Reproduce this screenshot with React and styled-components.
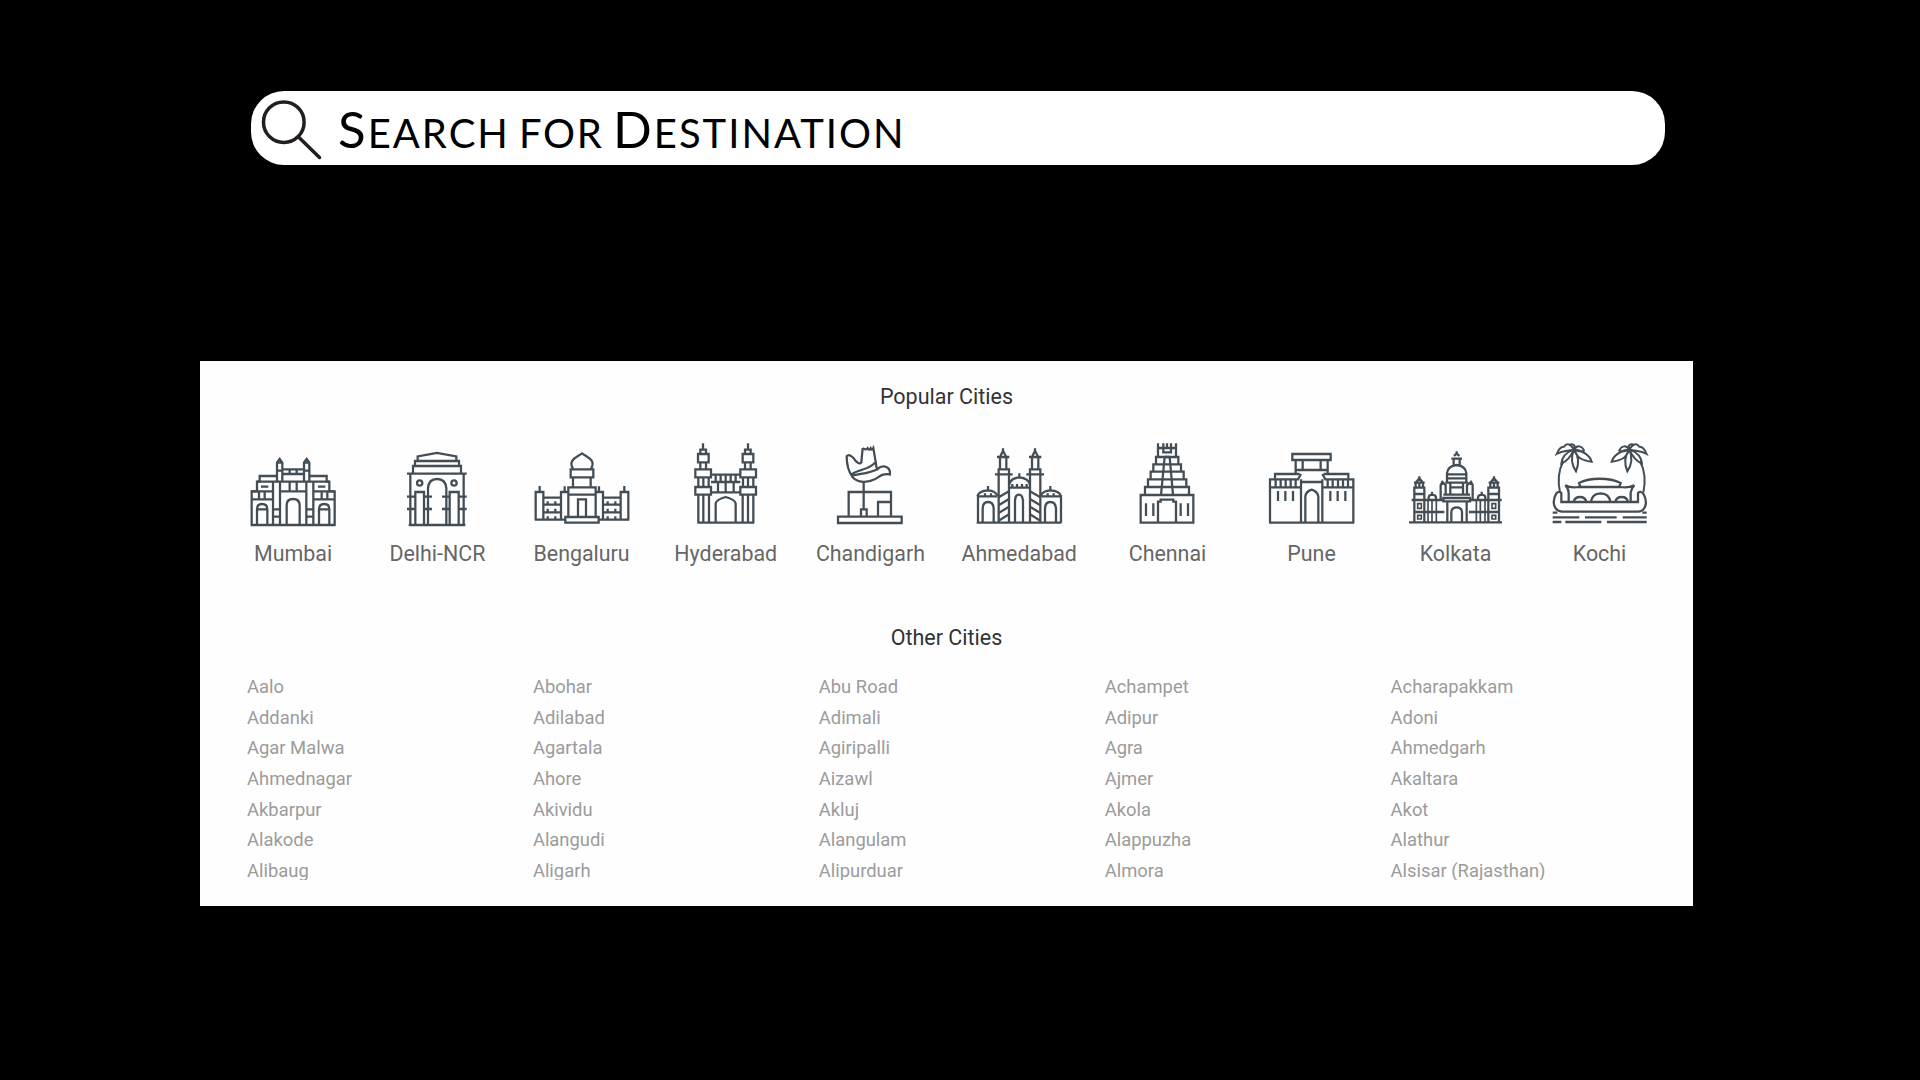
import React from 'react';
import styled, { createGlobalStyle } from 'styled-components';

const GlobalStyle = createGlobalStyle`
  *, *::before, *::after { box-sizing: border-box; }
  body { margin: 0; background: #000; overflow: hidden; }
`;

const Page = styled.div`
  width: 1920px;
  height: 1080px;
  padding: 91px 226px 0 200px;
  background: #000;
  font-family: Roboto, 'Liberation Sans', sans-serif;
`;

const SearchBar = styled.div`
  display: flex;
  align-items: flex-start;
  width: 1414px;
  height: 74px;
  margin-left: 51px;
  padding-left: 9px;
  border-radius: 33px;
  background: #fff;
`;

const SearchIcon = styled.svg`
  flex: none;
  width: 64px;
  height: 64px;
  margin-top: 7px;
  fill: none;
  stroke: #231f20;
  stroke-width: 3.5;
`;

const Placeholder = styled.div`
  display: flex;
  margin-left: 14px;
  font-family: Lato, 'Open Sans', sans-serif;
  font-size: 57px;
  line-height: 71px;
  color: #000;
  white-space: pre;
`;

const Word = styled.span`
  display: block;
  flex: none;
  width: ${(p) => p.$width}px;
  font-variant: small-caps;
  letter-spacing: ${(p) => p.$spacing}px;
  &::first-letter { font-size: ${(p) => (p.$capital ? '51px' : '57px')}; }
`;

const Panel = styled.main`
  width: 1493px;
  height: 545px;
  margin-top: 196px;
  padding-top: 20px;
  background: #fefefe;
`;

const Heading = styled.h2`
  margin: 0;
  font-size: 21.5px;
  font-weight: 400;
  line-height: 32px;
  text-align: center;
  color: #333;
`;

const PopularList = styled.div`
  display: flex;
  margin: 27px 0 55px 21px;
`;

const City = styled.div`
  display: flex;
  flex: none;
  flex-direction: column;
  align-items: center;
  width: ${(p) => p.$width}px;
  font-size: 21.4px;
  line-height: 26px;
  color: #666;
  white-space: nowrap;
`;

const CityIcon = styled.svg`
  width: 100px;
  height: 90px;
  margin-bottom: 11px;
  fill: none;
  stroke: #434d55;
  stroke-width: 6.8;
`;

const OtherList = styled.div`
  display: grid;
  grid-template-columns: repeat(5, 285.9px);
  grid-auto-rows: 30.65px;
  height: 207.5px;
  margin: 18px 0 0 47px;
  overflow: hidden;
`;

const OtherCity = styled.div`
  font-size: 18.4px;
  line-height: 30px;
  color: #9b9b9b;
  white-space: nowrap;
`;

const Mumbai = () => (
  <>
    <path d="M66 285V184H82V155H90V138H142M315 285V184H299V155H291V138H239M63 285H318" />
    <path d="M82 155H299M66 184H130M251 184H315M66 208H130M251 208H315M88 184V208M105 184V208M276 184V208M293 184V208" />
    <path d="M130 155V285M151 155V285M230 155V285M251 155V285M130 238H151M130 260H151M230 238H251M230 260H251M151 184H230M180 155V184M201 155V184" />
    <path d="M142 155V98L150 87L158 98V155M223 155V98L231 87L239 98V155M142 98H158M223 98H239M158 118H223M158 132H223M180 118V132M201 118V132M142 122H158M223 122H239" />
    <path d="M171 285V226Q171 207 190 207Q210 207 210 226V285M82 285V238Q82 222 97 222Q113 222 113 238V285M268 285V238Q268 222 284 222Q299 222 299 238V285M82 238H113M268 238H299M94 170H116M265 170H287" />
  </>
);

const Delhi = () => (
  <>
    <path d="M565 93V79L623 69L681 79V93M557 108V93H689V108M551 130V108H695V130M533 131H712M543 131V285M703 131V285M538 285H708" />
    <path d="M596 285V175Q598 147 623 147Q649 147 651 175V285M558 285V186H584V285M661 285V186H688V285" />
    <circle cx="571" cy="159" r="8" />
    <circle cx="674" cy="159" r="8" />
    <path d="M533 200H558M584 200H608M533 237H558M584 237H608M638 200H661M688 200H712M638 237H661M688 237H712" />
  </>
);

const Bengaluru = () => (
  <>
    <path d="M76 269V186H99V269M331 269V186H354V269M88 186V168M342 186V168M73 269H165M265 269H357M99 203H152M278 203H331M99 224H152M278 224H331M99 247H152M278 247H331" />
    <path d="M112 214V224M135 214V224M112 236V247M135 236V247M112 259V269M135 259V269M292 214V224M315 214V224M292 236V247M315 236V247M292 259V269M315 259V269" />
    <path d="M152 269V186H174M278 269V186H256M163 186V169M266 186V169M174 260V172H256V260M174 194H256M165 261H265V278H165ZM203 260V208H227V260" />
    <path d="M188 172V142M241 172V142M181 118H249V142H181ZM188 116C173 91 195 84 215 70C235 84 257 91 242 116" />
  </>
);

const Hyderabad = () => (
  <>
    <path d="M556 118H603V142H556ZM691 118H738V142H691ZM556 171H603V194H556ZM691 171H738V194H691ZM564 72H596V97H564ZM698 72H730V97H698Z" />
    <path d="M571 72V59H588V72M579 59V40M705 72V59H722V72M714 59V40M571 97V118M588 97V118M705 97V118M722 97V118" />
    <path d="M565 142V171M580 142V171M596 142V171M699 142V171M714 142V171M730 142V171M565 194V278M580 194V278M597 194V278M698 194V278M714 194V278M730 194V278M562 278H733" />
    <path d="M603 134H691M603 156H691M603 187H691M617 134V156M632 134V156M647 134V156M662 134V156M677 134V156M624 156V187M647 156V187M671 156V187M617 278V220Q619 209 647 201Q675 209 677 220V278" />
  </>
);

const Chandigarh = () => (
  <>
    <path d="M116 260H307V279H116ZM148 260V186H275V260M236 260V216H275M185 260V238H202V260M193 238V157" />
    <path d="M190 54L186 97C181 105 171 97 163 85Q150 70 142 79C142 105 148 126 160 142C176 159 205 159 226 148C242 139 249 129 272 133Q274 113 255 109Q243 108 235 117Q229 111 230 101L222 54Q217 63 214 55Q209 63 205 55Q199 62 190 54M156 134C175 117 211 120 227 98M158 137C184 130 215 131 236 116" />
  </>
);

const Ahmedabad = () => (
  <>
    <path d="M531 278H785M535 278V199H593M533 199Q537 182 566 181Q586 182 594 197M565 182V168M784 278V199H725M723 197Q730 182 752 181Q780 182 784 199M752 182V168" />
    <path d="M597 278V118H628V278M691 278V118H722V278M586 133H639M680 133H733M592 81H629M688 81H725M601 118V81L610 62L620 81V118M697 118V81L706 62L716 81V118M610 62V55M706 62V55" />
    <path d="M628 173H691M628 164Q634 144 659 142Q686 144 691 164M659 142V130M638 173V162M652 173V162M667 173V162M681 173V162M549 278V235Q550 216 565 216Q581 216 582 235V278M736 278V235Q737 216 752 216Q767 216 769 235V278" />
    <path d="M646 278V211Q647 194 658 194Q668 194 670 211V278M597 202L628 184M597 226L628 207M597 249L628 230M597 272L628 253M722 202L691 184M722 226L691 207M722 249L691 230M722 272L691 253M556 199V190M574 199V190M744 199V190M762 199V190" />
  </>
);

const Chennai = () => (
  <>
    <path d="M94 278V195H252V278ZM146 278V215H154V209H192V215H200V278M110 220V258M132 220V258M214 220V258M236 220V258" />
    <path d="M107 195V171H239V195M116 171V148H231V171M124 148V125H223V148M132 125V103H215V125M140 103V81H207V103M146 81V40M200 81V40M146 54H200M162 40V67H185V40M173 40V54" />
    <path d="M166 81L155 195M181 81L191 195M166 81H181" />
  </>
);

const Pune = () => (
  <>
    <path d="M547 72H662V90H547ZM557 90V132M653 90V132M557 120H653M578 90V120M632 90V120M495 146V132H569M641 132H715V146" />
    <path d="M480 278V148H564L573 132M730 278V148H646L637 132M477 278H733M480 172H573M637 172H730M573 148V278M637 148V278M573 156H637" />
    <path d="M497 148V172M512 148V172M527 148V172M542 148V172M557 148V172M653 148V172M668 148V172M684 148V172M699 148V172M714 148V172M504 183V213M526 183V213M549 183V213M661 183V213M683 183V213M706 183V213" />
    <path d="M586 278V200Q587 185 605 179Q623 185 625 200V278" />
  </>
);

const Kolkata = () => (
  <>
    <path d="M57 277H336M73 277V173H103V277M295 277V173H327V277M65 210H163M237 210H335M73 192H103M295 192H327M73 246H163M237 246H327" />
    <path d="M77 173V158L88 145L99 158V173M88 145V139M72 158H104M301 173V158L312 145L323 158V173M312 145V139M296 158H328M88 158V173M312 158V173" />
    <path d="M83 221H94V235H83ZM83 256H94V267H83ZM306 221H317V235H306ZM306 256H317V267H306ZM114 210V277M126 210V277M139 210V277M259 210V277M271 210V277M285 210V277" strokeWidth="5" />
    <path d="M116 210V202Q117 195 126 194Q137 195 138 202V210M126 194V185M264 210V202Q265 195 275 194Q286 195 286 202V210M275 194V185" />
    <path d="M152 210V165L157 156L167 165V194M248 210V165L243 156L231 165V194M157 165V152M243 165V152M160 194H240M160 204H240V214H160ZM172 214V277M230 214V277M184 277V246Q185 232 200 232Q215 232 216 246V277" />
    <path d="M171 158V130Q173 108 200 105Q227 108 229 130V158M171 133H229M171 145H229M166 158H234M181 158V194M219 158V194M181 172H219M191 104V86H209V104M184 86H216M192 78L200 70L208 78M200 76V64" />
  </>
);

const Palm = ({ transform }) => (
  <g transform={transform} strokeWidth="6">
    <path d="M552 58C540 40 529 39 522 50C513 49 506 57 500 72C519 61 532 64 552 58ZM552 58C530 66 516 78 514 101C529 94 544 77 552 58ZM552 58C544 77 541 99 558 124C569 98 564 75 552 58ZM552 58C563 88 579 91 605 95C600 77 578 61 552 58ZM552 58C561 45 576 46 582 62C574 67 562 63 552 58ZM552 58C558 44 548 40 537 44" />
    <path d="M520 94C505 122 502 150 510 188" />
  </g>
);

const Kochi = () => (
  <>
    <Palm />
    <Palm transform="matrix(-1 0 0 1 1270 0)" />
    <path d="M514 216H744V189Q753 181 761 193C777 224 761 245 744 245H516C492 243 484 216 499 190Q507 182 514 189Z" />
    <path d="M536 216V188Q536 177 526 166Q543 175 565 171H692Q713 175 733 166Q723 177 722 188V216M571 170L567 159C600 142 658 142 692 159L688 170" />
    <path d="M551 216Q554 201 570 201Q586 201 589 216M603 216Q606 191 632 190Q658 191 661 216M676 216Q679 201 695 201Q711 201 714 216" />
    <path d="M488 248H502M757 248H770M488 262H568M585 262H680M698 262H770M488 276H514M526 276H634M651 276H770" />
  </>
);

const popularCities = [
  { name: 'Mumbai', Icon: Mumbai, center: 190, width: 144.3 },
  { name: 'Delhi-NCR', Icon: Delhi, center: 623, width: 144.2 },
  { name: 'Bengaluru', Icon: Bengaluru, center: 215, width: 144.2 },
  { name: 'Hyderabad', Icon: Hyderabad, center: 648, width: 144.2 },
  { name: 'Chandigarh', Icon: Chandigarh, center: 212, width: 145.2 },
  { name: 'Ahmedabad', Icon: Ahmedabad, center: 658, width: 152.4 },
  { name: 'Chennai', Icon: Chennai, center: 173, width: 144.1 },
  { name: 'Pune', Icon: Pune, center: 606, width: 144 },
  { name: 'Kolkata', Icon: Kolkata, center: 198, width: 144 },
  { name: 'Kochi', Icon: Kochi, center: 630, width: 144 },
];

const otherCities = [
  'Aalo', 'Abohar', 'Abu Road', 'Achampet', 'Acharapakkam',
  'Addanki', 'Adilabad', 'Adimali', 'Adipur', 'Adoni',
  'Agar Malwa', 'Agartala', 'Agiripalli', 'Agra', 'Ahmedgarh',
  'Ahmednagar', 'Ahore', 'Aizawl', 'Ajmer', 'Akaltara',
  'Akbarpur', 'Akividu', 'Akluj', 'Akola', 'Akot',
  'Alakode', 'Alangudi', 'Alangulam', 'Alappuzha', 'Alathur',
  'Alibaug', 'Aligarh', 'Alipurduar', 'Almora', 'Alsisar (Rajasthan)',
];

export default function App() {
  return (
    <Page>
      <GlobalStyle />
      <SearchBar>
        <SearchIcon viewBox="0 0 64 64">
          <circle cx="23.8" cy="24.2" r="20.3" />
          <path d="M38.5 39L59.5 59.5" strokeLinecap="round" />
        </SearchIcon>
        <Placeholder>
          <Word $capital $width={181} $spacing={2}>Search</Word>
          <Word $width={94} $spacing={1.7}>for</Word>
          <Word $capital $width={290} $spacing={2}>Destination</Word>
        </Placeholder>
      </SearchBar>
      <Panel>
        <Heading>Popular Cities</Heading>
        <PopularList>
          {popularCities.map(({ name, Icon, center, width }) => (
            <City key={name} $width={width}>
              <CityIcon viewBox={`${center - 150} 30 300 270`}>
                <Icon />
              </CityIcon>
              {name}
            </City>
          ))}
        </PopularList>
        <Heading>Other Cities</Heading>
        <OtherList>
          {otherCities.map((name) => (
            <OtherCity key={name}>{name}</OtherCity>
          ))}
        </OtherList>
      </Panel>
    </Page>
  );
}
